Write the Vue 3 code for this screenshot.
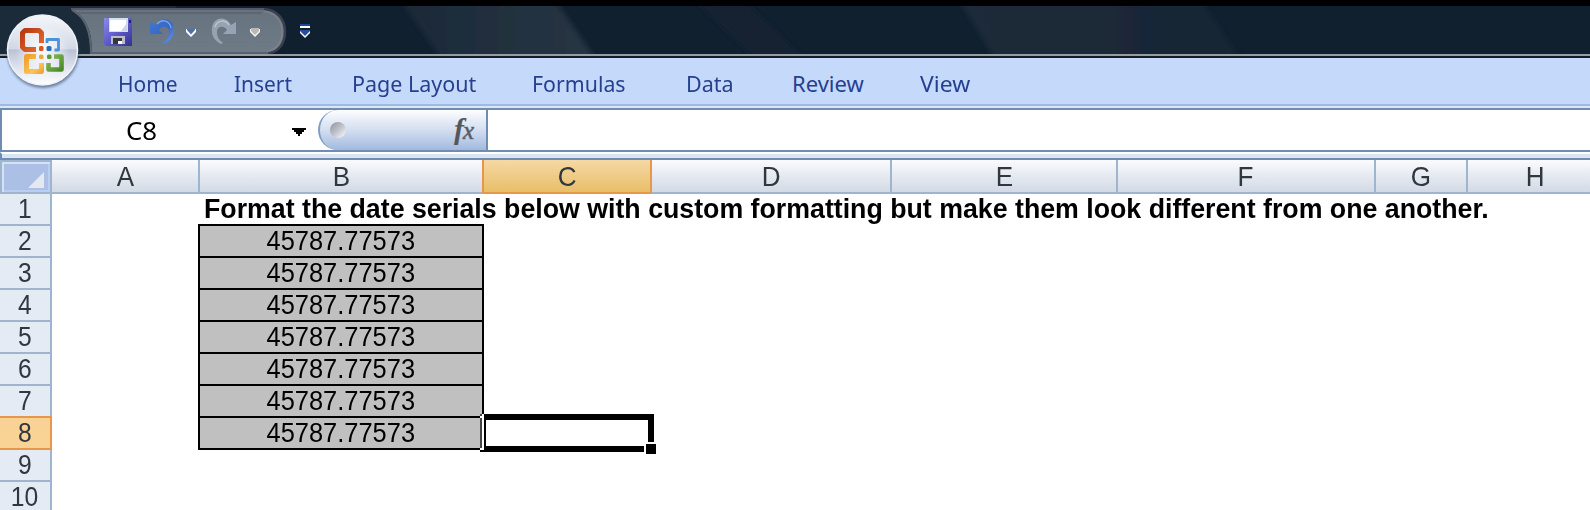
<script setup>
const tabs = [
  { label: 'Home', gap: 118, width: 60 },
  { label: 'Insert', gap: 56, width: 58 },
  { label: 'Page Layout', gap: 60, width: 124 },
  { label: 'Formulas', gap: 56, width: 94 },
  { label: 'Data', gap: 60, width: 48 },
  { label: 'Review', gap: 58, width: 72 },
  { label: 'View', gap: 56, width: 50 },
]

const columns = [
  { name: 'A', width: 148 },
  { name: 'B', width: 284 },
  { name: 'C', width: 170 },
  { name: 'D', width: 240 },
  { name: 'E', width: 226 },
  { name: 'F', width: 258 },
  { name: 'G', width: 92 },
  { name: 'H', width: 136 },
]

const rows = [1, 2, 3, 4, 5, 6, 7, 8, 9, 10]
const serials = Array(7).fill('45787.77573')
const title =
  'Format the date serials below with custom formatting but make them look different from one another.'

// Stretches a label horizontally to the given width in pixels.
const vFit = {
  mounted(el, { value }) {
    el.style.transform = `scaleX(${value / el.offsetWidth})`
  },
}
</script>

<template>
  <div class="window">
    <header class="titlebar">
      <svg class="sheen" width="1590" height="48" viewBox="0 0 1590 48">
        <defs>
          <linearGradient id="streakA"><stop offset="0" stop-color="#1b2a38" /><stop offset="1" stop-color="#273543" /></linearGradient>
          <linearGradient id="streakB"><stop offset="0" stop-color="#1e2c3a" /><stop offset="1" stop-color="#172635" /></linearGradient>
          <filter id="soft" x="-10%" y="-30%" width="120%" height="160%"><feGaussianBlur stdDeviation="3 0" /></filter>
        </defs>
        <rect width="1590" height="48" fill="#10202f" />
        <path d="M0 0H175L205 48H0Z" fill="#1b2b39" />
        <path d="M700 0H750L800 48H750Z" fill="#122231" filter="url(#soft)" />
        <path d="M405 0H559L592 48H438Z" fill="url(#streakA)" filter="url(#soft)" />
        <path d="M963 0H1205L1237 48H992Z" fill="url(#streakB)" filter="url(#soft)" />
      </svg>
      <svg class="qat" width="250" height="48" viewBox="70 6 250 48">
        <defs>
          <linearGradient id="qatFill" x1="0" y1="0" x2="0" y2="1"><stop offset="0" stop-color="#66727d" /><stop offset="1" stop-color="#6f7b86" /></linearGradient>
          <linearGradient id="disk" x1="0" y1="0" x2="1" y2="1"><stop offset="0" stop-color="#8a8ae6" /><stop offset=".5" stop-color="#5f5ac8" /><stop offset="1" stop-color="#35318f" /></linearGradient>
          <linearGradient id="undo" x1="0" y1="0" x2="1" y2="1"><stop offset="0" stop-color="#3f78d8" /><stop offset=".55" stop-color="#3767c4" /><stop offset="1" stop-color="#6f9bf0" /></linearGradient>
        </defs>
        <path d="M71 9H262C276 9 284.500 18 284.500 31.500S276 54 262 54H92C92 32 88 18 71 9Z" fill="url(#qatFill)" />
        <path d="M71 9H264" fill="none" stroke="#555866" stroke-width="2" />
        <path d="M75 13H262" fill="none" stroke="#4c5864" stroke-width="2" opacity=".45" />
        <path d="M91 53H268" fill="none" stroke="#5b5f70" stroke-width="2" />
        <path d="M264 9C278 10 285 20 285 31.500S279 52 268 53" fill="none" stroke="#393f4d" stroke-width="2.500" />
        <path d="M264 11C276 13 282 21 282 31.500S277 49 267 52" fill="none" stroke="#8b929b" stroke-width="1.500" opacity=".45" />
        <path d="M72 10C86 18 91 32 91 54" fill="none" stroke="#59636e" stroke-width="2" />

        <g>
          <path d="M104 18H132V46H106L104 44Z" fill="url(#disk)" />
          <path d="M109 18H128V32H109Z" fill="#d6def2" />
          <path d="M110 20H126V31H110Z" fill="#fff" />
          <path d="M121 31H127V23Z" fill="#c9d3ee" />
          <path d="M111 36H125V44H111Z" fill="#b9bccb" />
          <path d="M113 38H118V44H113Z" fill="#34373c" />
          <path d="M118 38H122V41H118Z" fill="#34373c" />
          <path d="M118 41H122V44H118Z" fill="#fff" />
          <path d="M129 20H131V23H129Z" fill="#242262" />
        </g>
        <g>
          <path d="M150 22V34H163L159 30C162 25 169 26 169 32C169 37 166 40 162 43L163 44C170 42 174 36 174 29C173 18 161 15 155 25Z" fill="url(#undo)" />
          <path d="M157 24C162 18 170 21 171 28" fill="none" stroke="#79a2ec" stroke-width="1.500" />
        </g>
        <path d="M186 29H188L191 33L194 29H196V32L191 37L186 32Z" fill="#fff" /><path d="M187 29H195V30L191 34.500L187 30Z" fill="#4773b4" />
        <g>
          <path d="M236 22V34H223L227 30C224 25 217 26 217 32C217 37 219 40 223 43L221 44C215 41 211 36 212 28C213 17 226 15 231 25Z" fill="#97a3b2" />
          <path d="M215 27C217 20 225 19 229 25" fill="none" stroke="#bdc5d0" stroke-width="1.500" />
        </g>
        <path d="M250 29H260V32L255 37L250 32Z" fill="#f4f4f4" /><path d="M251 28H259V31L255 35L251 31Z" fill="#bcb8b5" />
        <path d="M300 24H310V26H300Z" fill="#1e478f" /><path d="M300 26H310V28H300Z" fill="#fff" />
        <path d="M300 30H310V33L305 38L300 33Z" fill="#fff" /><path d="M300 30H310V31L305 36L300 31Z" fill="#234f9d" />
      </svg>
    </header>

    <nav class="ribbon">
      <div v-for="t in tabs" :key="t.label" class="tab" :style="{ marginLeft: t.gap + 'px', width: t.width + 'px' }">
        <span v-fit="t.width" class="fit">{{ t.label }}</span>
      </div>
    </nav>

    <svg class="office" width="84" height="84" viewBox="0 6 84 84">
      <defs>
        <linearGradient id="orb" x1="0" y1="0" x2="0" y2="1">
          <stop offset="0" stop-color="#f4f6fb" /><stop offset=".48" stop-color="#d3d8e5" />
          <stop offset=".5" stop-color="#b9c2d6" /><stop offset=".75" stop-color="#dfe3ee" /><stop offset="1" stop-color="#fff" />
        </linearGradient>
        <radialGradient id="orbGlow"><stop offset="0" stop-color="#fff" stop-opacity=".95" /><stop offset=".6" stop-color="#fff" stop-opacity=".45" /><stop offset="1" stop-color="#fff" stop-opacity="0" /></radialGradient>
        <linearGradient id="red" x1="0" y1="0" x2="1" y2="1"><stop offset="0" stop-color="#b33a12" /><stop offset="1" stop-color="#ec6b2c" /></linearGradient>
        <linearGradient id="gold" x1="0" y1="0" x2="1" y2="1"><stop offset="0" stop-color="#f0a02c" /><stop offset=".7" stop-color="#fbc655" /><stop offset="1" stop-color="#f2a63a" /></linearGradient>
        <linearGradient id="green" x1="0" y1="0" x2="1" y2="1"><stop offset="0" stop-color="#86bd58" /><stop offset="1" stop-color="#4a8a2c" /></linearGradient>
        <filter id="shade" x="-20%" y="-20%" width="140%" height="140%"><feGaussianBlur stdDeviation="1.500" /></filter>
      </defs>
      <circle cx="43" cy="52" r="36" fill="#34465f" opacity=".65" filter="url(#shade)" />
      <circle cx="42.500" cy="50" r="35" fill="url(#orb)" stroke="#eff2f8" stroke-width="1.500" />
      <circle cx="42.500" cy="52" r="27" fill="url(#orbGlow)" />
      <g fill="none" stroke-linejoin="round">
        <path d="M36 49.500H25L22.500 47V33L25 30.500H39L41.500 33V43" stroke="url(#red)" stroke-width="5" />
        <path d="M47 43V39.500H58.500V50H54.500" stroke="#4b92da" stroke-width="2.800" />
        <path d="M36 56.500H26.500V71.500H41.500V63" stroke="url(#gold)" stroke-width="5" />
        <path d="M54 56.500H61.500V69.500H48.500V63" stroke="url(#green)" stroke-width="4.600" />
      </g>
      <g>
        <rect x="39" y="46" width="4.500" height="5" rx="1.500" fill="#dc5420" />
        <rect x="46.500" y="46" width="5" height="5" rx="1.500" fill="#246cc0" />
        <rect x="39" y="54.500" width="4.500" height="4.500" rx="1.500" fill="#f0a83a" />
        <rect x="47" y="54.500" width="4.500" height="4.500" rx="1.500" fill="#5b9a3a" />
      </g>
    </svg>

    <div class="formula-bar">
      <div class="name-box">
        <span v-fit="31" class="fit cell-ref">C8</span>
        <svg class="drop" width="14" height="8" viewBox="0 0 14 8"><path d="M0 0H14V2H12V4H10V6H8V8H6V6H4V4H2V2H0Z" /></svg>
      </div>
      <div class="fx-pill">
        <i class="knob"></i>
        <span class="fx"><b>f</b><b class="x">x</b></span>
      </div>
      <div class="entry"></div>
    </div>
    <div class="divider"></div>

    <div class="columns">
      <div class="corner">
        <svg width="16" height="16" viewBox="0 0 16 16"><path d="M0 16L16 0V16Z" fill="#e4e8f1" /></svg>
      </div>
      <div v-for="c in columns" :key="c.name" class="col" :class="{ active: c.name === 'C' }" :style="{ width: c.width + 'px' }"><span>{{ c.name }}</span></div>
    </div>

    <div class="sheet">
      <div class="row-heads">
        <div v-for="r in rows" :key="r" class="row-head" :class="{ active: r === 8 }"><span>{{ r }}</span></div>
      </div>
      <div class="cells">
        <div class="title"><span v-fit="1285" class="fit">{{ title }}</span></div>
        <div class="serials">
          <div v-for="(s, i) in serials" :key="i" class="serial"><span v-fit="149" class="centered">{{ s }}</span></div>
        </div>
        <svg class="selection" width="176" height="40" viewBox="480 414 176 40" shape-rendering="crispEdges">
          <path d="M480 414H484V450H480Z" fill="#fff" />
          <path d="M480 414H482V416H480ZM480 418H482V448H480Z" fill="#444" />
          <path d="M484 414H654V442H648V420H486V446H644V452H480V450H484Z" fill="#000" />
          <path d="M646 444H656V454H646Z" fill="#000" />
        </svg>
      </div>
    </div>
  </div>
</template>

<style scoped>
.window {
  position: relative;
  display: flex;
  flex-direction: column;
  width: 1590px;
  height: 510px;
  overflow: hidden;
  background: #fff;
  font-family: "Liberation Sans", Arial, sans-serif;
}
.window > * { flex: none; }
.fit {
  display: inline-block;
  white-space: nowrap;
  transform-origin: 0 50%;
}
.centered { display: inline-block; white-space: nowrap; }
.titlebar {
  position: relative;
  box-sizing: border-box;
  height: 58px;
  padding: 0 0 0 70px;
  border-top: 6px solid #000;
  border-bottom: 2px solid #151b22;
  background: #969da2;
}
.sheen { position: absolute; left: 0; top: 0; }
.qat { position: relative; display: block; }
.ribbon {
  display: flex;
  box-sizing: border-box;
  height: 50px;
  background: #c5dafb;
  border-bottom: 2px solid #d9e6f7;
  box-shadow: inset 0 -2px #a0b9df;
  color: #26408f;
  font: 22px/50px "Noto Sans", "Open Sans", sans-serif;
}
.tab { flex: none; }
.office { position: absolute; left: 0; top: 6px; }
.formula-bar {
  display: flex;
  box-sizing: border-box;
  height: 44px;
  border: 2px solid #6f8db0;
  border-right: 0;
  background: #fff;
}
.name-box {
  display: flex;
  align-items: center;
  box-sizing: border-box;
  width: 316px;
  padding: 0 12px 0 124px;
  justify-content: space-between;
}
.cell-ref { font: 25px/40px "Noto Sans", sans-serif; color: #000; }
.drop { margin-top: 4px; }
.fx-pill {
  display: flex;
  align-items: center;
  justify-content: space-between;
  box-sizing: border-box;
  width: 170px;
  padding: 0 12px 0 10px;
  border-left: 2px solid #809dc2;
  border-right: 2px solid #6f8db0;
  border-radius: 20px 0 0 20px;
  background: linear-gradient(#fdfdff, #d3def0 50%, #a2bade);
}
.knob {
  width: 16px;
  height: 16px;
  border-radius: 50%;
  background: linear-gradient(135deg, #8f929b, #bfc2cb 50%, #fff);
}
.fx {
  display: flex;
  align-items: baseline;
  font: italic 30px/34px "Liberation Serif", serif;
  color: #55575c;
}
.fx b { font-weight: 700; }
.fx .x { margin-left: -1px; font-size: 25px; font-weight: 400; -webkit-text-stroke: 0.6px #66686e; }
.divider {
  box-sizing: border-box;
  height: 8px;
  border-top: 2px solid #fff;
  border-left: 2px solid #6f8db0;
  border-bottom: 2px solid #6f8db0;
  background: #dae5f4;
}
.columns { display: flex; height: 34px; }
.corner {
  display: flex;
  flex: none;
  align-items: flex-end;
  justify-content: flex-end;
  box-sizing: border-box;
  width: 52px;
  padding: 0 6px 4px 0;
  border: 2px solid #9fb5cd;
  background: #abc0e4;
  box-shadow: inset 2px 2px #d5e1f5, inset -2px -2px #b9cff2;
}
.corner svg { display: block; }
.col {
  flex: none;
  box-sizing: border-box;
  height: 34px;
  padding-top: 2px;
  border-right: 2px solid #9fb5cd;
  border-bottom: 2px solid #9fb5cd;
  background: linear-gradient(#fafbfd, #e5e9f0 50%, #d3dae6);
  color: #30373e;
  font-size: 28px;
  line-height: 30px;
  text-align: center;
}
.col span { display: inline-block; transform: scaleX(0.93); }
.col.active {
  margin-left: -2px;
  border-left: 2px solid #e6974a;
  border-color: #e6974a;
  background: linear-gradient(#f5d8a4, #e8be69);
}
.sheet { display: flex; height: 316px; overflow: hidden; }
.row-heads { flex: none; width: 52px; }
.row-head {
  box-sizing: border-box;
  height: 32px;
  border-right: 2px solid #9fb5cd;
  border-bottom: 2px solid #9fb5cd;
  background: #e4ebf5;
  color: #30373e;
  font-size: 28px;
  line-height: 30px;
  text-align: center;
}
.row-head span { display: inline-block; transform: scaleX(0.88); }
.row-head.active {
  height: 34px;
  margin-top: -2px;
  border-top: 2px solid #e6974a;
  border-color: #e6974a;
  background: #f9d396;
}
.cells { position: relative; flex: 1; padding-left: 146px; font-size: 28px; line-height: 30px; color: #000; }
.title { height: 30px; padding-left: 6px; font-weight: 700; }
.serials {
  box-sizing: border-box;
  width: 286px;
  border: 2px solid #000;
  border-bottom: 0;
}
.serial {
  box-sizing: border-box;
  height: 32px;
  border-bottom: 2px solid #000;
  background: #c0c0c0;
  text-align: center;
}
.selection { position: absolute; left: 428px; top: 220px; }
</style>

<style>
body { margin: 0; background: #fff; }
</style>
